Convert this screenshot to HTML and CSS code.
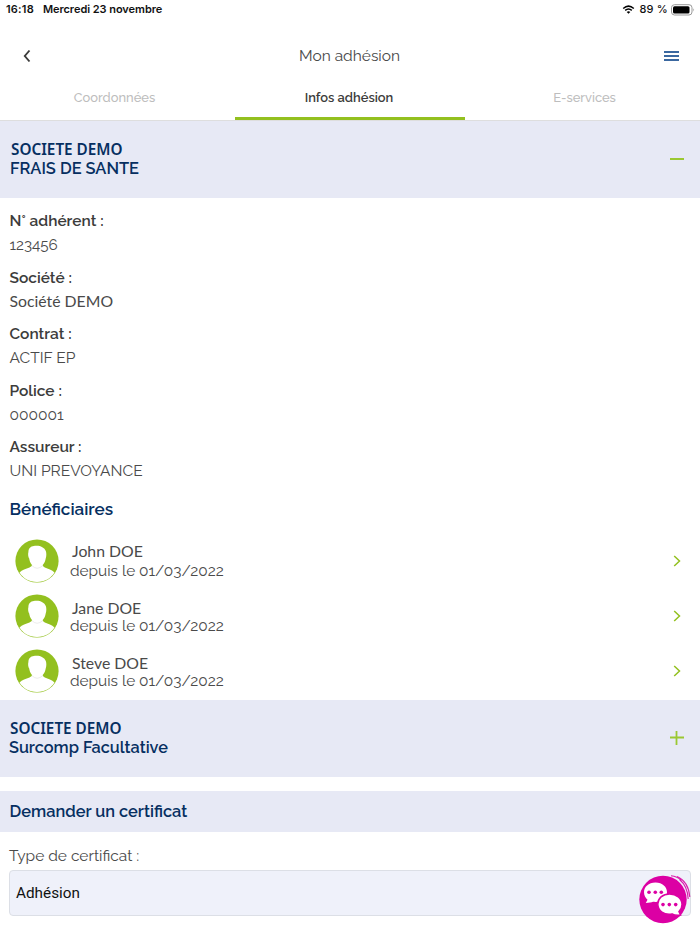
FILE: index.html
```
<!DOCTYPE html>
<html lang="fr">
<head>
    <meta charset="UTF-8">
    <meta name="viewport" content="width=device-width, initial-scale=1.0">
    <title>Mon adhésion</title>
    <!-- Stylesheet -->
    <link rel="stylesheet" href="styles.css">
</head>
<body>
    <svg class="defs" width="0" height="0">
        <symbol id="avatar" viewBox="0 0 44 44">
            <circle cx="22" cy="22" r="21.600" fill="#93c01f"/>
            <path d="M4.500 33.500C7 30.800 11 30 14.500 28.500C16.300 27.500 17 27 17 26C15 24 14.400 21 14.200 19.500C13.200 18 12.800 15 13.400 13C13.500 8.500 17 7 20 6.800C24 6 29.500 8 30.800 12C31.600 14 31.500 17.500 30.700 19.500C30.300 22 29.500 24.300 27.700 26C27.700 27 28.300 27.500 29.800 28.500C33 30 37 30.800 39.500 33.500C35.500 39.500 30 43 22 43C14 43 8.500 39.500 4.500 33.500Z" fill="#fff"/>
            <path d="M16.800 26.500Q22 32 27.900 26.500" fill="none" stroke="#e6e6e6" stroke-width=".8"/>
        </symbol>
        <symbol id="chevron" viewBox="0 0 8 12">
            <path d="M1.200 1L6.500 6L1.200 11" fill="none" stroke="#93c01f" stroke-width="1.500"/>
        </symbol>
    </svg>

    <div class="status">
        <span class="time">16:18</span>
        <span class="date">Mercredi 23 novembre</span>
        <svg class="wifi" width="13" height="9" viewBox="0 0 12 9">
            <path d="M.7 3.500Q6-1.200 11.300 3.500M2.700 5.400Q6 2.500 9.300 5.400" fill="none" stroke="#000" stroke-width="1.500"/>
            <path d="M4.200 6.900Q6 5.600 7.800 6.900L6 8.800Z"/>
        </svg>
        <span class="percent">89 %</span>
        <svg class="battery" width="24" height="12" viewBox="0 0 24 12">
            <rect x=".5" y=".7" width="20.500" height="10.300" rx="3" fill="#fff" stroke="#999"/>
            <rect x="2" y="2.200" width="16.500" height="7.300" rx="1.500"/>
            <path d="M22.300 4.200Q24 5.800 22.300 7.500Z" fill="#999"/>
        </svg>
    </div>

    <header class="header">
        <svg class="back" width="8" height="14" viewBox="0 0 8 14">
            <path d="M6.500 1.500L1.800 7L6.500 12.500" fill="none" stroke="#3c3c3b" stroke-width="1.900"/>
        </svg>
        <h1>Mon adhésion</h1>
        <div class="menu"><i></i><i></i><i></i></div>
    </header>

    <nav class="tabs">
        <a class="tab">Coordonnées</a>
        <a class="tab active">Infos adhésion</a>
        <a class="tab last">E-services</a>
    </nav>

    <section class="panel">
        <div class="panel-title first">
            <h2 class="company">SOCIETE DEMO</h2>
            <h2>FRAIS DE SANTE</h2>
        </div>
        <svg width="14" height="14" viewBox="0 0 14 14"><path d="M0 6H14" stroke="#9bc832" stroke-width="2"/></svg>
    </section>

    <dl class="infos">
        <dt>N° adhérent :</dt>
        <dd class="number">123456</dd>
        <dt>Société :</dt>
        <dd class="human">Société DEMO</dd>
        <dt>Contrat :</dt>
        <dd>ACTIF EP</dd>
        <dt>Police :</dt>
        <dd>000001</dd>
        <dt>Assureur :</dt>
        <dd>UNI PREVOYANCE</dd>
    </dl>

    <h3 class="subtitle">Bénéficiaires</h3>
    <ul class="people">
        <li>
            <svg class="avatar"><use href="#avatar"/></svg>
            <div class="person">
                <span class="name human">John DOE</span>
                <span class="since">depuis le 01/03/2022</span>
            </div>
            <svg class="chevron"><use href="#chevron"/></svg>
        </li>
        <li>
            <svg class="avatar"><use href="#avatar"/></svg>
            <div class="person near">
                <span class="name human">Jane DOE</span>
                <span class="since">depuis le 01/03/2022</span>
            </div>
            <svg class="chevron"><use href="#chevron"/></svg>
        </li>
        <li>
            <svg class="avatar"><use href="#avatar"/></svg>
            <div class="person nearer">
                <span class="name human">Steve DOE</span>
                <span class="since">depuis le 01/03/2022</span>
            </div>
            <svg class="chevron"><use href="#chevron"/></svg>
        </li>
    </ul>

    <section class="panel">
        <div class="panel-title">
            <h2 class="company">SOCIETE DEMO</h2>
            <h2 class="surcomp">Surcomp Facultative</h2>
        </div>
        <svg width="14" height="14" viewBox="0 0 14 14"><path d="M0 6.500H14M6.500 0V14" stroke="#9bc832" stroke-width="1.800"/></svg>
    </section>

    <h2 class="band">Demander un certificat</h2>
    <div class="field">
        <label>Type de certificat :</label>
        <div class="select">Adhésion</div>
    </div>

    <!-- Chat button -->
    <svg class="chat" width="52" height="49" viewBox="0 0 52 49">
        <circle cx="24" cy="24.500" r="23.700" fill="#dc00a4"/>
        <g fill="none" stroke="#dc1cac" stroke-width="1.100">
            <path d="M32 .8C37 1.200 40 3 42.500 5.500"/>
            <path d="M38 1.500C45 4.500 50 12 50.800 22"/>
            <path d="M40.500 4.500C46 9 48.800 15 49.200 24"/>
        </g>
        <path d="M16.500 7.500C9.500 7.500 5 12 5 17.300C5 20.700 6.500 23 8.500 24.800L6.800 28C10 28 12.500 27.300 14 26.800C22 27.800 28 23.500 28 17.300C28 12 23.500 7.500 16.500 7.500Z" fill="#fff"/>
        <path d="M30.500 18.900C23.500 18.900 18.800 23.500 18.800 29C18.800 36 25 40.200 33 38.900C35 40 38.500 40.400 41.600 40L40 36.600C42 34.800 43 32.500 43 29.500C43 23.500 37.500 18.900 30.500 18.900Z" fill="#fff" stroke="#dc00a4" stroke-width="1.500"/>
        <g fill="#dc00a4">
            <circle cx="10" cy="17.300" r="1.800"/><circle cx="16.300" cy="17.300" r="1.800"/><circle cx="22.300" cy="17.300" r="1.800"/>
            <circle cx="24" cy="29.600" r="1.800"/><circle cx="30.300" cy="29.600" r="1.800"/><circle cx="36.700" cy="29.600" r="1.800"/>
        </g>
    </svg>
</body>
</html>
```
FILE: styles.css
```
*{
    padding: 0;
    margin: 0;
    box-sizing: border-box;
}
body{
    width: 700px;
    height: 934px;
    overflow: hidden;
    background-color: #ffffff;
    color: #4a4a4a;
    font-family: Raleway, Lato, sans-serif;
    font-size: 15.5px;
    line-height: 24px;
    white-space: nowrap;
}
.defs{
    position: absolute;
}
.status{
    display: flex;
    align-items: center;
    height: 19px;
    padding: 0 5px 0 6px;
    color: #111111;
    font: 600 11px/19px Inter, sans-serif;
}
.time{
    letter-spacing: 0.2px;
}
.date{
    margin-left: 9px;
    letter-spacing: -0.05px;
}
.wifi{
    margin-left: auto;
}
.percent{
    margin: 0 3px 0 4px;
    font-weight: 500;
    letter-spacing: 0.2px;
}
.header{
    display: flex;
    align-items: center;
    justify-content: space-between;
    height: 74px;
    padding: 0 21px 0 23px;
}
h1{
    padding-left: 4px;
    font-size: 15.5px;
    font-weight: 400;
}
.menu{
    display: flex;
    flex-direction: column;
    gap: 2px;
}
.menu i{
    width: 15px;
    height: 2px;
    background-color: #3b68a0;
}
.tabs{
    display: flex;
    height: 28px;
    border-bottom: 1px solid #dedede;
}
.tab{
    flex: 0 0 235px;
    height: 27px;
    padding-right: 6px;
    text-align: center;
    color: #bdbdbd;
    font-size: 12.9px;
    font-weight: 500;
    line-height: 9px;
}
.tab.active{
    flex: 0 0 230px;
    padding: 0 2px 0 0;
    color: #3c3c3b;
    font-weight: 600;
    border-bottom: 3px solid #93c01f;
}
.tab.last{
    padding: 0 0 0 4px;
}
.panel{
    display: flex;
    align-items: center;
    justify-content: space-between;
    height: 77px;
    padding: 0 16px 0 9px;
    background-color: #e7e9f5;
}
.panel h2{
    color: #062f61;
    font-size: 16.4px;
    font-weight: 600;
    line-height: 19px;
}
.panel .company{
    padding-left: 1px;
    font: 600 15.3px/19px "Noto Sans", sans-serif;
}
.first{
    padding: 0 0 2px 1px;
}
.panel .first .company{
    line-height: 20px;
}
.panel .surcomp{
    font-size: 16.3px;
}
.infos{
    padding: 11px 9.5px 0;
    height: 299px;
}
dt{
    color: #3c3c3b;
    font-weight: 600;
    height: 24px;
}
dd{
    height: 24px;
    margin-bottom: 8.5px;
}
.number{
    font-size: 15.2px;
}
.human{
    font-family: Lato, sans-serif;
    font-size: 15.8px;
}
dd.human{
    line-height: 22px;
}
.subtitle{
    padding-left: 9.5px;
    color: #062f61;
    font-size: 17.1px;
    font-weight: 600;
}
.people{
    list-style: none;
    padding-top: 12.5px;
    height: 178.5px;
}
.people li{
    display: flex;
    align-items: center;
    height: 55px;
    padding: 0 19px 0 15px;
}
.avatar{
    width: 44px;
    height: 44px;
}
.person{
    display: flex;
    flex-direction: column;
    flex: 1;
    padding-left: 11px;
    font-size: 15.4px;
    line-height: 20px;
}
.name{
    padding-left: 2px;
}
.near{
    padding-top: 1px;
    line-height: 19px;
}
.nearer{
    padding-top: 1px;
    line-height: 18px;
}
.chevron{
    width: 8px;
    height: 12px;
}
.band{
    height: 41px;
    margin-top: 14px;
    padding-left: 9.5px;
    background-color: #e7e9f5;
    color: #062f61;
    font-size: 16.4px;
    font-weight: 600;
    line-height: 41px;
}
.field{
    padding: 12px 9px 0;
}
.field label{
    display: block;
    height: 26px;
}
.select{
    height: 46px;
    padding-left: 6px;
    border: 1px solid #dcdfe6;
    border-radius: 4px;
    background-color: #eff1fa;
    color: #111111;
    font: 400 15.3px/45px Roboto, sans-serif;
}
.chat{
    position: absolute;
    left: 639px;
    top: 875px;
}
```
